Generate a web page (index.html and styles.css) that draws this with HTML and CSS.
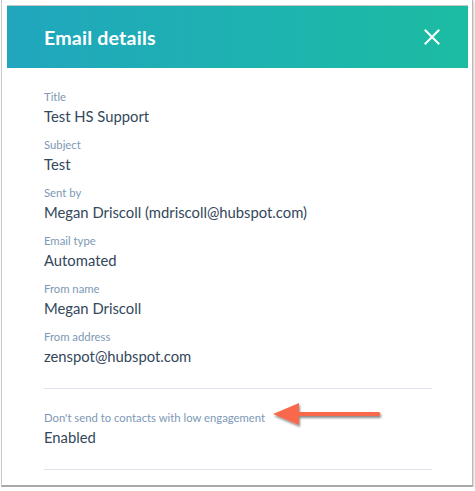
FILE: index.html
```html
<!DOCTYPE html>
<html lang="en">
<head>
    <meta charset="UTF-8">
    <meta name="viewport" content="width=device-width, initial-scale=1.0">
    <title>Email details</title>
    <link rel="stylesheet" href="styles.css">
</head>
<body>
    <div class="frame">
        <div class="panel">
            <header class="panel-header">
                <h1>Email details</h1>
                <button class="close" type="button" aria-label="Close">
                    <svg width="16" height="16" viewBox="0 0 16 16">
                        <path d="M1.5 1.5 L14.5 14.5 M14.5 1.5 L1.5 14.5" stroke="#fff" stroke-width="2" stroke-linecap="square"/>
                    </svg>
                </button>
            </header>
            <div class="panel-body">
                <div class="field">
                    <div class="label">Title</div>
                    <div class="value">Test HS Support</div>
                </div>
                <div class="field">
                    <div class="label">Subject</div>
                    <div class="value">Test</div>
                </div>
                <div class="field">
                    <div class="label">Sent by</div>
                    <div class="value">Megan Driscoll (mdriscoll@hubspot.com)</div>
                </div>
                <div class="field">
                    <div class="label">Email type</div>
                    <div class="value">Automated</div>
                </div>
                <div class="field">
                    <div class="label">From name</div>
                    <div class="value">Megan Driscoll</div>
                </div>
                <div class="field">
                    <div class="label">From address</div>
                    <div class="value">zenspot@hubspot.com</div>
                </div>
                <hr class="divider">
                <div class="field engagement">
                    <div class="label">Don't send to contacts with low engagement</div>
                    <div class="value">Enabled</div>
                    <!-- annotation arrow -->
                    <svg class="arrow" width="124" height="34" viewBox="0 0 124 34">
                        <defs>
                            <filter id="shadow" x="-10%" y="-30%" width="130%" height="180%">
                                <feDropShadow dx="1" dy="2" stdDeviation="1.3" flood-color="#000" flood-opacity="0.45"/>
                            </filter>
                        </defs>
                        <g filter="url(#shadow)">
                            <path d="M4 14 L30 3 L30 12 L110 12 Q113 14 110 16 L30 16 L30 25 Z" fill="#f8694b"/>
                        </g>
                    </svg>
                </div>
                <hr class="divider">
            </div>
        </div>
    </div>
</body>
</html>
```

FILE: styles.css
```css
body {
    margin: 0;
    background: #fff;
    font-family: Lato, "Open Sans", sans-serif;
}
.frame {
    width: 472px;
    height: 487px;
    margin-left: 1px;
    border-left: 1px solid #c9c9c9;
    border-right: 1px solid #b8b8b8;
    border-bottom: 2px solid #a8a8a8;
    box-shadow: 1px 1px 2px rgba(0, 0, 0, 0.2);
    box-sizing: border-box;
    padding-top: 5px;
}
.panel {
    margin-left: 5px;
    width: 461px;
    border-top: 1px solid #c6c6c6;
}
.panel-header {
    height: 62px;
    display: flex;
    align-items: center;
    justify-content: space-between;
    padding: 0 28px 0 37px;
    background: linear-gradient(90deg, #21a6be 0%, #1db4ae 60%, #1cbca2 100%);
}
.panel-header h1 {
    margin: 0;
    color: #fff;
    font-size: 19.6px;
    font-weight: 700;
    letter-spacing: 0.2px;
    padding-top: 1px;
}
.close {
    background: none;
    border: none;
    padding: 0;
    width: 16px;
    height: 16px;
    display: flex;
    cursor: pointer;
}
.panel-body {
    padding: 20px 36px 0 37px;
}
.field {
    margin-bottom: 10px;
}
.label {
    font-size: 11.3px;
    line-height: 18px;
    color: #7c98b6;
}
.value {
    font-size: 14.8px;
    line-height: 20px;
    color: #33475b;
}
.divider {
    border: none;
    border-top: 1px solid #dfe3eb;
    margin: 22px 0 20px 0;
}
.engagement {
    position: relative;
    margin-bottom: 0;
}
.arrow {
    position: absolute;
    left: 225px;
    top: -9px;
}
```
